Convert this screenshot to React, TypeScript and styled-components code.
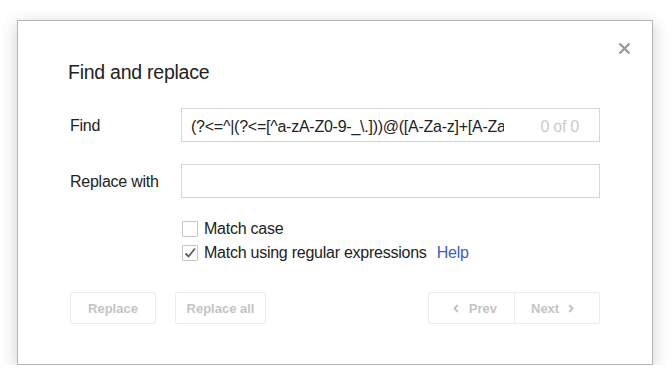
import { createGlobalStyle, styled } from 'styled-components';

const GlobalStyle = createGlobalStyle`
  body {
    margin: 0;
    background: #fff;
    font-family: "Liberation Sans", Arial, sans-serif;
  }
`;

const FIND_TEXT = '(?<=^|(?<=[^a-zA-Z0-9-_\\.]))@([A-Za-z]+[A-Za-z0-9_]+)';

const Chevron = ({ dir }: { dir: 'left' | 'right' }) => (
  <svg width="6" height="9" viewBox="0 0 6 9">
    <polyline
      points={dir === 'left' ? '4.8,1 1.5,4.5 4.8,8' : '1.2,1 4.5,4.5 1.2,8'}
      fill="none"
      stroke="#c4c4c4"
      strokeWidth="2"
    />
  </svg>
);

const App = () => {
  return (
    <Page>
      <GlobalStyle />
      <Dialog>
        <CloseButton aria-label="Close">
          <svg width="13" height="13" viewBox="0 0 13 13">
            <path d="M1.5 1.5 L11.5 11.5 M11.5 1.5 L1.5 11.5" stroke="#9a9a9a" strokeWidth="2.4" />
          </svg>
        </CloseButton>
        <Title>Find and replace</Title>

        <FieldRow>
          <Label>Find</Label>
          <Field>
            <TextInput defaultValue={FIND_TEXT} />
            <Counter>0 of 0</Counter>
          </Field>
        </FieldRow>

        <FieldRow $gap={22}>
          <Label>Replace with</Label>
          <Field>
            <TextInput defaultValue="" />
          </Field>
        </FieldRow>

        <Options>
          <Option>
            <Box />
            Match case
          </Option>
          <Option>
            <Box>
              <svg width="14" height="14" viewBox="0 0 14 14">
                <polyline points="2.5,7.5 5.5,10.5 12,2.5" fill="none" stroke="#5e5e5e" strokeWidth="1.8" />
              </svg>
            </Box>
            Match using regular expressions <HelpLink href="#">Help</HelpLink>
          </Option>
        </Options>

        <Footer>
          <ButtonGroup>
            <Button $width={86}>Replace</Button>
            <Button $width={91}>Replace all</Button>
          </ButtonGroup>
          <Segmented>
            <NavButton $side="left">
              <Chevron dir="left" />
              Prev
            </NavButton>
            <NavButton $side="right">
              Next
              <Chevron dir="right" />
            </NavButton>
          </Segmented>
        </Footer>
      </Dialog>
    </Page>
  );
};

const Page = styled.div`
  padding: 20px 0 0 17px;
`;

const Dialog = styled.div`
  position: relative;
  box-sizing: border-box;
  width: 636px;
  padding: 41px 52px 40px 52px;
  background: #fff;
  border: 1px solid #b4b4b4;
  box-shadow: 0 4px 16px rgba(0, 0, 0, 0.2);
  color: #222;
`;

const CloseButton = styled.div`
  position: absolute;
  top: 21px;
  right: 21px;
  width: 13px;
  height: 13px;
  display: flex;
  cursor: pointer;
`;

const Title = styled.div`
  margin: -1px 0 24px -2px;
  font-size: 19.5px;
  line-height: 23px;
  letter-spacing: -0.25px;
  color: #222;
`;

const FieldRow = styled.div<{ $gap?: number }>`
  display: flex;
  align-items: center;
  margin-top: ${(p) => p.$gap ?? 0}px;
`;

const Label = styled.div`
  width: 111px;
  flex-shrink: 0;
  padding-top: 2px;
  font-size: 16px;
  letter-spacing: -0.25px;
  color: #222;
`;

const Field = styled.div`
  flex: 1;
  box-sizing: border-box;
  height: 34px;
  padding: 3px 20px 0 9px;
  display: flex;
  align-items: center;
  border: 1px solid #d6d6d6;
  background: #fff;
`;

const TextInput = styled.input`
  flex: 1;
  min-width: 0;
  padding: 0;
  border: none;
  outline: none;
  background: transparent;
  font-family: "Liberation Sans", Arial, sans-serif;
  font-size: 16px;
  letter-spacing: -0.25px;
  color: #222;
`;

const Counter = styled.span`
  margin-left: 36px;
  font-size: 16px;
  letter-spacing: -0.25px;
  color: #cacaca;
  white-space: nowrap;
`;

const Options = styled.div`
  margin: 19px 0 0 112px;
  display: flex;
  flex-direction: column;
`;

const Option = styled.label`
  height: 24px;
  display: flex;
  align-items: center;
  gap: 6px;
  font-size: 16px;
  letter-spacing: -0.25px;
  color: #222;
  white-space: pre;
`;

const Box = styled.span`
  box-sizing: border-box;
  width: 16px;
  height: 16px;
  display: flex;
  align-items: center;
  justify-content: center;
  border: 1px solid #c6c6c6;
  border-radius: 1px;
  background: #fff;
`;

const HelpLink = styled.a`
  color: #3a5ccc;
  text-decoration: none;
`;

const Footer = styled.div`
  margin-top: 27px;
  display: flex;
  justify-content: space-between;
`;

const ButtonGroup = styled.div`
  display: flex;
  gap: 19px;
`;

const Button = styled.div<{ $width: number }>`
  box-sizing: border-box;
  width: ${(p) => p.$width}px;
  height: 32px;
  display: flex;
  align-items: center;
  justify-content: center;
  border: 1px solid #ececec;
  border-radius: 2px;
  font-size: 13px;
  font-weight: bold;
  color: #c4c4c4;
`;

const Segmented = styled.div`
  display: flex;
  border: 1px solid #ececec;
  border-radius: 2px;
`;

const NavButton = styled.div<{ $side: 'left' | 'right' }>`
  box-sizing: border-box;
  width: 85px;
  height: 30px;
  display: flex;
  align-items: center;
  gap: ${(p) => (p.$side === 'left' ? 10 : 9)}px;
  justify-content: ${(p) => (p.$side === 'left' ? 'flex-end' : 'flex-start')};
  padding: ${(p) => (p.$side === 'left' ? '0 17px 0 0' : '0 0 0 16px')};
  border-left: ${(p) => (p.$side === 'right' ? '1px solid #ececec' : 'none')};
  font-size: 13px;
  font-weight: bold;
  color: #c4c4c4;
`;

export default App;
